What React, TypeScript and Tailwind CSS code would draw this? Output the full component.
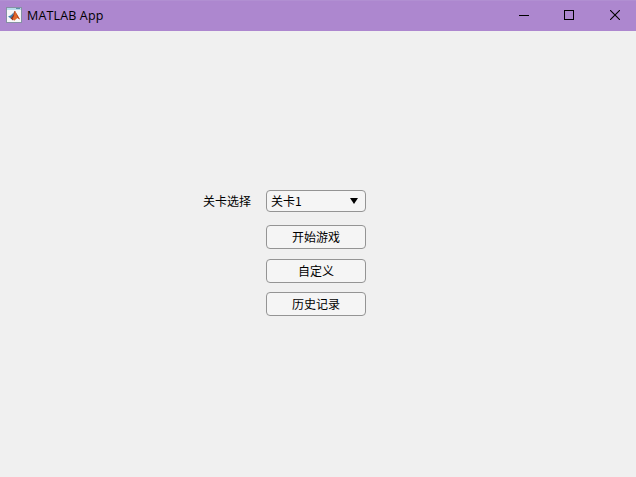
function AppIcon() {
  return (
    <svg width="16" height="16" viewBox="0 0 16 16" className="block">
      <rect x="0.5" y="0.5" width="15" height="15" fill="#f6f7f9" stroke="#8591a3" />
      <rect x="1" y="1" width="14" height="2" fill="#b9dceb" />
      <rect x="10" y="1" width="4" height="1" fill="#5c93ab" />
      <path d="M2 9.6 L5 8.2 L7.8 5.2 L7 9.8 L4.8 11.6 Z" fill="#3f7fae" />
      <path d="M4.6 11.4 L7 8.4 L8.4 4 L9.4 4 L9 9.8 L7 13.4 Z" fill="#8e3322" />
      <path d="M8.8 3.8 L10.6 6.4 L14 12.6 L11.4 11 L8.2 13.8 L6.6 11.6 L8 9 Z" fill="#e2682a" />
      <path d="M9.8 5.4 L14 12.6 L11.6 11 Z" fill="#b54322" />
    </svg>
  );
}

function TitleBar() {
  return (
    <header className="flex h-[31px] items-center border-t border-[#b18fd2] bg-[#ad87cf] pb-0.5 pl-1.5">
      <AppIcon />
      <span className="ml-[5px] flex-1 pt-px font-['Open_Sans','Noto_Sans',sans-serif] text-[12.5px] leading-4 tracking-[0.15px]">
        MATLAB App
      </span>
      <button aria-label="Minimize" className="flex h-full w-[45px] items-center justify-center">
        <svg width="10" height="10" viewBox="0 0 10 10" shapeRendering="crispEdges">
          <path d="M0 5.5H10" stroke="#000" />
        </svg>
      </button>
      <button aria-label="Maximize" className="flex h-full w-[46px] items-center justify-center">
        <svg width="10" height="10" viewBox="0 0 10 10" shapeRendering="crispEdges">
          <rect x="0.5" y="0.5" width="9" height="9" fill="none" stroke="#000" />
        </svg>
      </button>
      <button aria-label="Close" className="flex h-full w-[44px] items-center justify-center pl-0.5">
        <svg width="10" height="10" viewBox="0 0 10 10">
          <path d="M0 0L10 10M10 0L0 10" stroke="#000" strokeWidth="1.1" />
        </svg>
      </button>
    </header>
  );
}

function PushButton({ label }: { label: string }) {
  return (
    <button className="flex h-6 w-[100px] items-center justify-center rounded-[4px] border border-[#949494] bg-[#f5f5f5] pb-px leading-4">
      {label}
    </button>
  );
}

export default function App() {
  return (
    <div className="flex h-[477px] w-[636px] flex-col overflow-hidden bg-[#f0f0f0] font-['Noto_Sans_CJK_SC',sans-serif] text-[12px] text-black">
      <TitleBar />
      <main className="flex flex-1 flex-col pt-[159px] pl-[203px]">
        <div className="flex h-[22px] items-center">
          <span className="w-[63px] pb-px leading-4">关卡选择</span>
          <button className="flex h-[22px] w-[100px] items-center justify-between rounded-[4px] border border-[#949494] bg-[#f5f5f5] pr-[7px] pl-1 leading-4">
            <span className="pb-px">关卡1</span>
            <svg width="8" height="6" viewBox="0 0 8 6">
              <path d="M0 0H8L4 6Z" fill="#000" />
            </svg>
          </button>
        </div>
        <div className="mt-[13px] ml-[63px] flex flex-col">
          <PushButton label="开始游戏" />
          <div className="mt-2.5 mb-[9px]">
            <PushButton label="自定义" />
          </div>
          <PushButton label="历史记录" />
        </div>
      </main>
    </div>
  );
}
